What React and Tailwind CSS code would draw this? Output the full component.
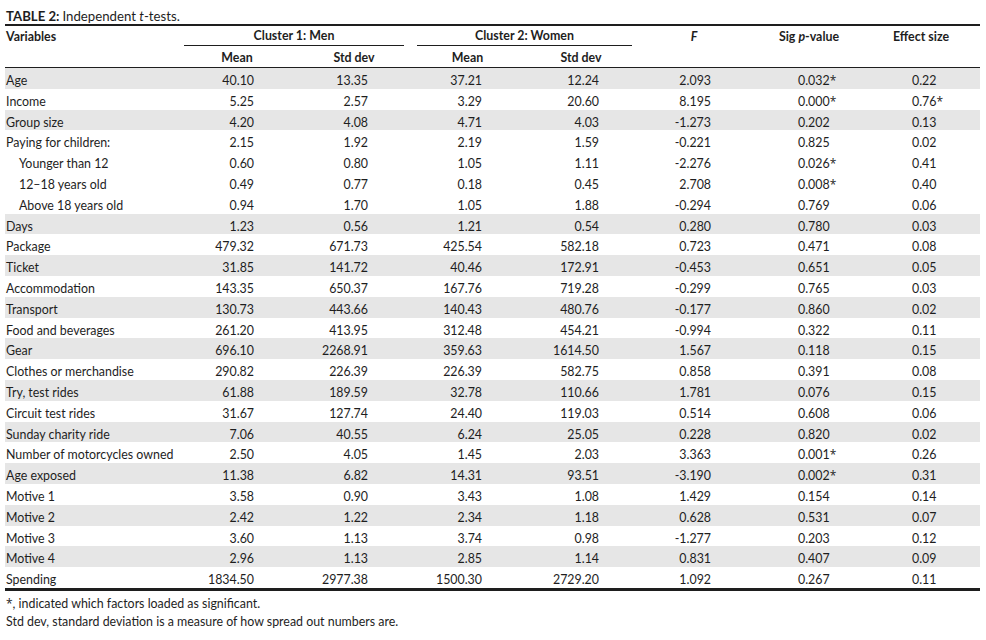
import React from 'react';

const rows = [
  ['Age', '40.10', '13.35', '37.21', '12.24', '2.093', '0.032*', '0.22', true],
  ['Income', '5.25', '2.57', '3.29', '20.60', '8.195', '0.000*', '0.76*'],
  ['Group size', '4.20', '4.08', '4.71', '4.03', '-1.273', '0.202', '0.13', true],
  ['Paying for children:', '2.15', '1.92', '2.19', '1.59', '-0.221', '0.825', '0.02'],
  ['Younger than 12', '0.60', '0.80', '1.05', '1.11', '-2.276', '0.026*', '0.41', false, true],
  ['12–18 years old', '0.49', '0.77', '0.18', '0.45', '2.708', '0.008*', '0.40', false, true],
  ['Above 18 years old', '0.94', '1.70', '1.05', '1.88', '-0.294', '0.769', '0.06', false, true],
  ['Days', '1.23', '0.56', '1.21', '0.54', '0.280', '0.780', '0.03', true],
  ['Package', '479.32', '671.73', '425.54', '582.18', '0.723', '0.471', '0.08'],
  ['Ticket', '31.85', '141.72', '40.46', '172.91', '-0.453', '0.651', '0.05', true],
  ['Accommodation', '143.35', '650.37', '167.76', '719.28', '-0.299', '0.765', '0.03'],
  ['Transport', '130.73', '443.66', '140.43', '480.76', '-0.177', '0.860', '0.02', true],
  ['Food and beverages', '261.20', '413.95', '312.48', '454.21', '-0.994', '0.322', '0.11'],
  ['Gear', '696.10', '2268.91', '359.63', '1614.50', '1.567', '0.118', '0.15', true],
  ['Clothes or merchandise', '290.82', '226.39', '226.39', '582.75', '0.858', '0.391', '0.08'],
  ['Try, test rides', '61.88', '189.59', '32.78', '110.66', '1.781', '0.076', '0.15', true],
  ['Circuit test rides', '31.67', '127.74', '24.40', '119.03', '0.514', '0.608', '0.06'],
  ['Sunday charity ride', '7.06', '40.55', '6.24', '25.05', '0.228', '0.820', '0.02', true],
  ['Number of motorcycles owned', '2.50', '4.05', '1.45', '2.03', '3.363', '0.001*', '0.26'],
  ['Age exposed', '11.38', '6.82', '14.31', '93.51', '-3.190', '0.002*', '0.31', true],
  ['Motive 1', '3.58', '0.90', '3.43', '1.08', '1.429', '0.154', '0.14'],
  ['Motive 2', '2.42', '1.22', '2.34', '1.18', '0.628', '0.531', '0.07', true],
  ['Motive 3', '3.60', '1.13', '3.74', '0.98', '-1.277', '0.203', '0.12'],
  ['Motive 4', '2.96', '1.13', '2.85', '1.14', '0.831', '0.407', '0.09', true],
  ['Spending', '1834.50', '2977.38', '1500.30', '2729.20', '1.092', '0.267', '0.11'],
];

const cols = 'grid grid-cols-[179px_110px_110px_13px_107px_108px_124px_106px_118px]';

// values with a trailing star: draw the star in a font where it sits larger
function Val({ v }) {
  if (!v.endsWith('*')) return v;
  return (
    <>
      {v.slice(0, -1)}
      <span className="font-['Open_Sans'] text-[12px]">*</span>
    </>
  );
}

export default function App() {
  return (
    <div className="w-[986px] h-[640px] bg-white text-[#1e1e1e] text-[12.4px] font-['Lato','Carlito',sans-serif] tabular-nums">
      <div className="ml-[5px] w-[975px] pt-[6px]">
        <div className="h-[18px] flex items-center pl-[1px] pt-[3px] text-[13.2px]">
          <span className="font-bold">TABLE 2:</span>
          <span className="ml-[3px]">
            Independent <i>t</i>-tests.
          </span>
        </div>
        <div className="h-[2px] bg-[#1e1e1e]" />

        {/* header */}
        <div className={`${cols} font-bold`}>
          <div className="h-[20px] flex items-center pl-[1px] pt-[2px]">Variables</div>
          <div className="col-span-2 h-[20px] flex items-center justify-center pt-[2px] border-b border-[#1e1e1e]">
            Cluster 1: Men
          </div>
          <div />
          <div className="col-span-2 h-[20px] flex items-center justify-center pt-[2px] border-b border-[#1e1e1e]">
            Cluster 2: Women
          </div>
          <div className="h-[20px] flex items-center justify-center pt-[2px]">
            <i>F</i>
          </div>
          <div className="h-[20px] flex items-center justify-center pt-[2px]">
            <span>
              Sig <i>p</i>-value
            </span>
          </div>
          <div className="h-[20px] flex items-center justify-center pt-[2px]">Effect size</div>

          <div className="h-[21px]" />
          <div className="h-[21px] flex items-center justify-center pr-[4px] pt-[4px]">Mean</div>
          <div className="h-[21px] flex items-center justify-center pl-[10px] pt-[4px]">Std dev</div>
          <div />
          <div className="h-[21px] flex items-center justify-center pr-[6px] pt-[4px]">Mean</div>
          <div className="h-[21px] flex items-center justify-center pl-[6px] pt-[4px]">Std dev</div>
          <div />
          <div />
          <div />
        </div>
        <div className="h-[1px] bg-[#1e1e1e]" />

        {/* body */}
        <div>
          {rows.map((r) => (
            <div key={r[0]} className={`${cols} h-[20.8px] pt-[4px] items-center ${r[8] ? 'bg-[#e6e6e6]' : ''}`}>
              <div className={r[9] ? 'pl-[14px]' : 'pl-[1px]'}>{r[0]}</div>
              <div className="text-right pr-[40px]">{r[1]}</div>
              <div className="text-right pr-[36px]">{r[2]}</div>
              <div />
              <div className="text-right pr-[42px]">{r[3]}</div>
              <div className="text-right pr-[33px]">{r[4]}</div>
              <div className="text-right pr-[45px]">{r[5]}</div>
              <div className="pl-[42px]">
                <Val v={r[6]} />
              </div>
              <div className="pl-[50px]">
                <Val v={r[7]} />
              </div>
            </div>
          ))}
        </div>
        <div className="h-[3px] bg-[#1e1e1e]" />

        <div className="pl-[1px]">
          <div className="h-[18px] mt-[3px] pt-[3px] flex items-center">
            <span className="font-['Open_Sans'] text-[12px]">*</span>, indicated which factors loaded as significant.
          </div>
          <div className="h-[17px] pt-[3px] flex items-center">Std dev, standard deviation is a measure of how spread out numbers are.</div>
        </div>
      </div>
    </div>
  );
}
